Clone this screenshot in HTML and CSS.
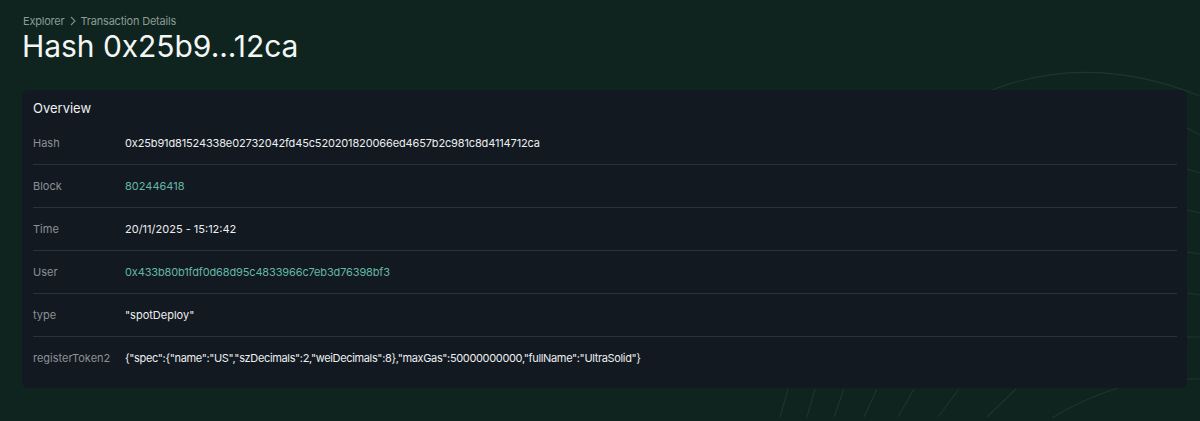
FILE: index.html
```html
<!DOCTYPE html>
<html lang="en">
<head>
<meta charset="utf-8">
<title>Transaction Details</title>
<link rel="stylesheet" href="styles.css">
</head>
<body>
<div class="page">
  <svg class="deco" width="1200" height="421" viewBox="0 0 1200 421" aria-hidden="true">
    <g fill="none" stroke="#1c362e" stroke-width="1.1">
      <path d="M992 90 Q1090 52 1200 96"/>
      <path d="M1187 128 L1200 135"/>
      <path d="M1187 169 L1200 173"/>
      <path d="M1187 210 L1200 213"/>
      <path d="M1187 252 L1200 254"/>
      <path d="M1187 293 L1200 295"/>
      <path d="M1187 337 L1200 337"/>
      <path d="M1187 379 L1200 379"/>
      <path d="M788 389 L780 417"/>
      <path d="M815 389 L807 417"/>
      <path d="M844 389 L834 417"/>
      <path d="M877 389 L864 417"/>
      <path d="M914 389 L898 417"/>
      <path d="M959 389 L938 417"/>
      <path d="M1016 389 L987 417"/>
      <path d="M1118 388 Q1080 400 1052 418"/>
    </g>
  </svg>
  <main class="content">
    <nav class="crumbs">
      <span>Explorer</span>
      <svg class="chev" width="8" height="10" viewBox="0 0 8 10"><path d="M2 1 L6 5 L2 9" fill="none" stroke="#7d8c88" stroke-width="1.1"/></svg>
      <span>Transaction Details</span>
    </nav>
    <h1 class="title">Hash 0x25b9...12ca</h1>
    <section class="card">
      <div class="card-head">Overview</div>
      <div class="row"><div class="label">Hash</div><div class="value hex">0x25b91d81524338e02732042fd45c520201820066ed4657b2c981c8d4114712ca</div></div>
      <div class="row"><div class="label">Block</div><div class="value link">802446418</div></div>
      <div class="row"><div class="label">Time</div><div class="value">20/11/2025 - 15:12:42</div></div>
      <div class="row"><div class="label">User</div><div class="value link hex">0x433b80b1fdf0d68d95c4833966c7eb3d76398bf3</div></div>
      <div class="row"><div class="label">type</div><div class="value">"spotDeploy"</div></div>
      <div class="row last"><div class="label">registerToken2</div><div class="value json">{"spec":{"name":"US","szDecimals":2,"weiDecimals":8},"maxGas":50000000000,"fullName":"UltraSolid"}</div></div>
    </section>
  </main>
</div>
</body>
</html>
```

FILE: styles.css
```css
* { box-sizing: border-box; }
html, body {
  margin: 0;
  padding: 0;
  background: #0f241f;
  font-family: Inter, "Noto Sans", "Liberation Sans", sans-serif;
  color: #e8eaec;
}
.page {
  position: relative;
  width: 1200px;
  height: 421px;
  overflow: hidden;
  background: #0f241f;
}
.deco {
  position: absolute;
  left: 0;
  top: 0;
}
.content {
  position: relative;
  padding: 13px 13px 0 22px;
}
.crumbs {
  display: flex;
  align-items: center;
  gap: 3px;
  height: 15px;
  padding-left: 1px;
  font-size: 11px;
  letter-spacing: -0.2px;
  color: #8c9b96;
}
.chev { margin: 0 1px; }
.title {
  margin: 0;
  height: 36px;
  line-height: 36px;
  font-size: 30px;
  font-weight: 400;
  color: #f4f6f6;
  letter-spacing: -0.05px;
}
.card {
  margin-top: 26px;
  width: 1165px;
  background: #131920;
  border-radius: 6px;
  padding: 0 10px 9px 11px;
}
.card-head {
  height: 32px;
  display: flex;
  align-items: center;
  padding-top: 3px;
  font-size: 13px;
  color: #eef0f1;
}
.row {
  display: flex;
  align-items: center;
  height: 43px;
  border-bottom: 1px solid #2a3139;
  font-size: 11px;
}
.row.last { border-bottom: none; height: 42px; }
.label {
  width: 92px;
  flex: none;
  color: #8b9196;
}
.value { color: #eceef0; }
.value.hex { letter-spacing: -0.14px; }
.value.json { letter-spacing: -0.35px; }
.value.link { color: #63b7a6; }
```
